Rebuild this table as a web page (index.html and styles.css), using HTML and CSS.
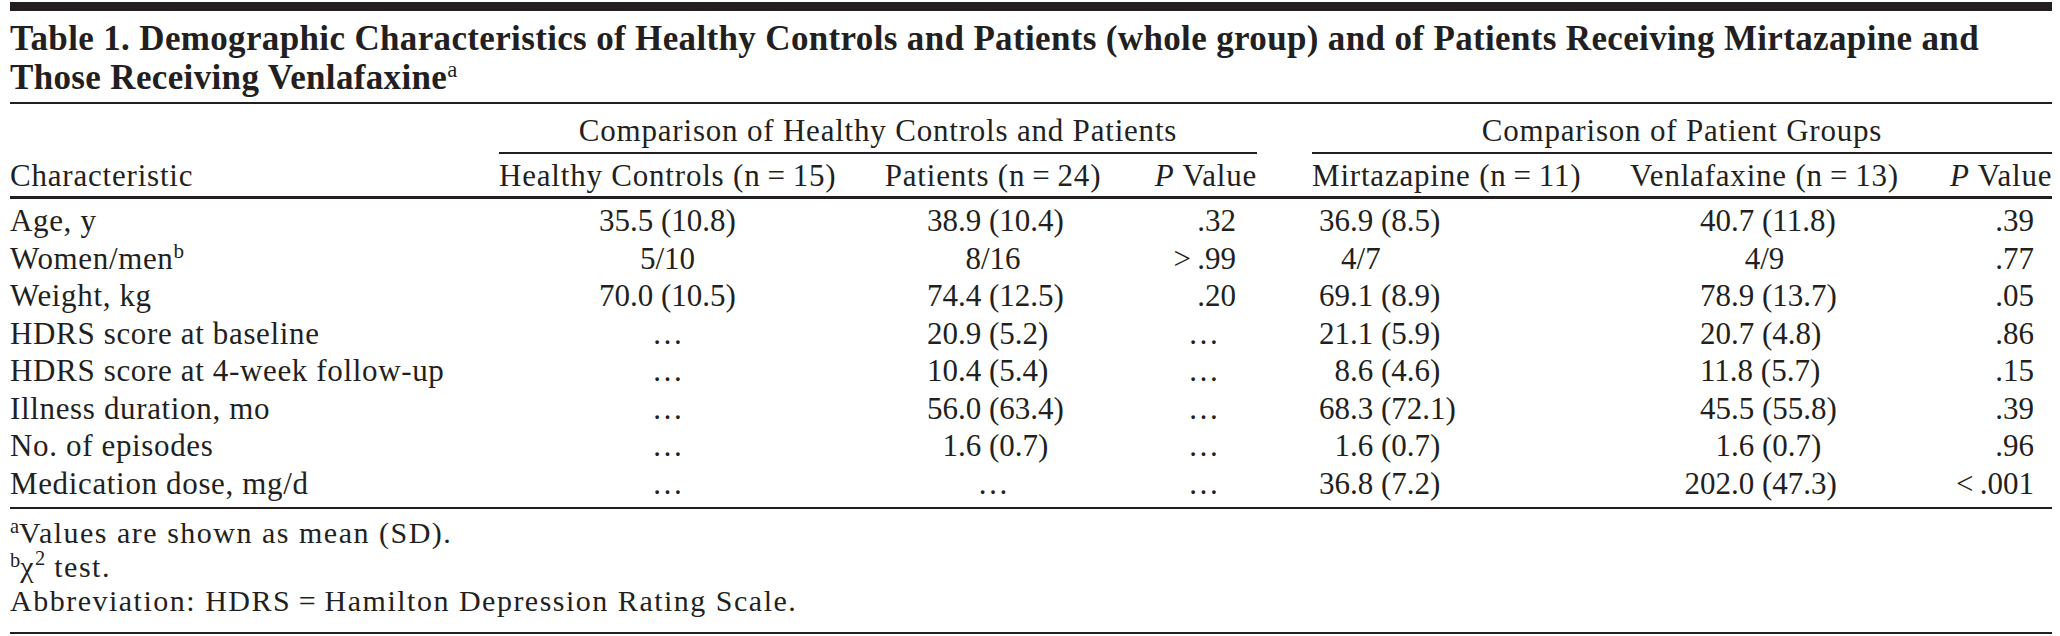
FILE: index.html
```html
<!DOCTYPE html>
<html lang="en">
<head>
<meta charset="utf-8">
<title>Table 1</title>
<link rel="stylesheet" href="styles.css">
</head>
<body>
<div class="page">
  <div class="topbar"></div>
  <h1 class="title">Table 1. Demographic Characteristics of Healthy Controls and Patients (whole group) and of Patients Receiving Mirtazapine and<br>Those Receiving Venlafaxine<sup>a</sup></h1>
  <table class="data">
    <colgroup>
      <col class="c-char">
      <col class="c-hc">
      <col class="c-pt">
      <col class="c-p1">
      <col class="c-gap">
      <col class="c-mz">
      <col class="c-vx">
      <col class="c-p2">
    </colgroup>
    <thead>
      <tr class="span-row">
        <th></th>
        <th colspan="3" class="spanner">Comparison of Healthy Controls and Patients</th>
        <th></th>
        <th colspan="3" class="spanner">Comparison of Patient Groups</th>
      </tr>
      <tr class="head-row">
        <th class="lbl">Characteristic</th>
        <th>Healthy Controls (n&#8201;=&#8201;15)</th>
        <th>Patients (n&#8201;=&#8201;24)</th>
        <th class="pv"><i>P</i> Value</th>
        <th></th>
        <th>Mirtazapine (n&#8201;=&#8201;11)</th>
        <th>Venlafaxine (n&#8201;=&#8201;13)</th>
        <th class="pv pv2"><i>P</i> Value</th>
      </tr>
    </thead>
    <tbody>
      <tr>
        <td class="lbl">Age, y</td>
        <td class="hc">35.5 (10.8)</td>
        <td class="pt">38.9 (10.4)</td>
        <td class="p1">.32</td>
        <td></td>
        <td class="mz">36.9 (8.5)</td>
        <td class="vx">40.7 (11.8)</td>
        <td class="p2">.39</td>
      </tr>
      <tr>
        <td class="lbl">Women/men<sup>b</sup></td>
        <td class="ctr">5/10</td>
        <td class="ctr">8/16</td>
        <td class="p1">&gt;&#8201;.99</td>
        <td></td>
        <td class="frac">4/7</td>
        <td class="ctr">4/9</td>
        <td class="p2">.77</td>
      </tr>
      <tr>
        <td class="lbl">Weight, kg</td>
        <td class="hc">70.0 (10.5)</td>
        <td class="pt">74.4 (12.5)</td>
        <td class="p1">.20</td>
        <td></td>
        <td class="mz">69.1 (8.9)</td>
        <td class="vx">78.9 (13.7)</td>
        <td class="p2">.05</td>
      </tr>
      <tr>
        <td class="lbl">HDRS score at baseline</td>
        <td class="ctr">&hellip;</td>
        <td class="pt">20.9 (5.2)</td>
        <td class="ctr">&hellip;</td>
        <td></td>
        <td class="mz">21.1 (5.9)</td>
        <td class="vx">20.7 (4.8)</td>
        <td class="p2">.86</td>
      </tr>
      <tr>
        <td class="lbl">HDRS score at 4-week follow-up</td>
        <td class="ctr">&hellip;</td>
        <td class="pt">10.4 (5.4)</td>
        <td class="ctr">&hellip;</td>
        <td></td>
        <td class="mz one">8.6 (4.6)</td>
        <td class="vx">11.8 (5.7)</td>
        <td class="p2">.15</td>
      </tr>
      <tr>
        <td class="lbl">Illness duration, mo</td>
        <td class="ctr">&hellip;</td>
        <td class="pt">56.0 (63.4)</td>
        <td class="ctr">&hellip;</td>
        <td></td>
        <td class="mz">68.3 (72.1)</td>
        <td class="vx">45.5 (55.8)</td>
        <td class="p2">.39</td>
      </tr>
      <tr>
        <td class="lbl">No. of episodes</td>
        <td class="ctr">&hellip;</td>
        <td class="pt one">1.6 (0.7)</td>
        <td class="ctr">&hellip;</td>
        <td></td>
        <td class="mz one">1.6 (0.7)</td>
        <td class="vx one">1.6 (0.7)</td>
        <td class="p2">.96</td>
      </tr>
      <tr class="last">
        <td class="lbl">Medication dose, mg/d</td>
        <td class="ctr">&hellip;</td>
        <td class="ctr">&hellip;</td>
        <td class="ctr">&hellip;</td>
        <td></td>
        <td class="mz">36.8 (7.2)</td>
        <td class="vx three">202.0 (47.3)</td>
        <td class="p2">&lt;&#8201;.001</td>
      </tr>
    </tbody>
  </table>
  <div class="notes">
    <p><sup>a</sup>Values are shown as mean (SD).</p>
    <p><sup>b</sup>&chi;<sup class="exp">2</sup> test.</p>
    <p>Abbreviation: HDRS&#8201;=&#8201;Hamilton Depression Rating Scale.</p>
  </div>
</div>
</body>
</html>
```

FILE: styles.css
```css
html, body {
  margin: 0;
  padding: 0;
  background: #ffffff;
}

body {
  font-family: "Liberation Serif", "Times New Roman", serif;
  color: #231f20;
  font-size: 31px;
}

.page {
  width: 2042px;
  padding: 2px 8px 0 10px;
}

.topbar {
  height: 9px;
  background: #231f20;
}

.title {
  margin: 0;
  padding: 8px 0 5px 0;
  font-size: 35px;
  line-height: 39px;
  letter-spacing: 0.35px;
  font-weight: bold;
  border-bottom: 2px solid #231f20;
}

.title sup {
  font-size: 65%;
  line-height: 0;
  vertical-align: 0.55em;
  font-weight: normal;
}

.data {
  width: 2042px;
  table-layout: fixed;
  border-collapse: separate;
  border-spacing: 0;
}

.c-char { width: 489px; }
.c-hc { width: 337px; }
.c-pt { width: 314px; }
.c-p1 { width: 107px; }
.c-gap { width: 55px; }
.c-mz { width: 267px; }
.c-vx { width: 371px; }
.c-p2 { width: 102px; }

.data th,
.data td {
  padding: 0;
  font-weight: normal;
  line-height: 35px;
  white-space: nowrap;
}

.data th {
  letter-spacing: 0.8px;
}

.span-row th {
  padding-top: 9px;
  padding-bottom: 4px;
  text-align: center;
}

.span-row th.spanner {
  border-bottom: 2px solid #231f20;
}

.head-row th {
  padding-top: 4px;
  padding-bottom: 3px;
  text-align: center;
  border-bottom: 3px solid #231f20;
}

.head-row th.lbl {
  text-align: left;
}

.head-row th.pv {
  text-align: right;
}

.head-row th.pv2 {
  padding-right: 2px;
}

.data tbody td {
  line-height: 37.5px;
  text-align: left;
}

.data tbody tr:first-child td {
  padding-top: 3px;
}

.data tbody tr.last td {
  padding-bottom: 5px;
  border-bottom: 2px solid #231f20;
}

.data td.lbl {
  text-align: left;
  letter-spacing: 0.65px;
}
.data td.hc { padding-left: 100px; }
.data td.pt { padding-left: 91px; }
.data td.mz { padding-left: 7px; }
.data td.vx { padding-left: 121px; }
.data td.p1 { text-align: right; padding-right: 21px; }
.data td.p2 { text-align: right; padding-right: 18px; }
.data td.ctr { text-align: center; }
.data td.one { text-indent: 0.5em; }
.data td.three { text-indent: -0.5em; }
.data td.frac { padding-left: 29px; }

sup {
  font-size: 68%;
  line-height: 0;
  vertical-align: 0.5em;
  letter-spacing: 0;
}

sup.exp {
  vertical-align: 0.6em;
}

.notes {
  padding: 7px 0 14px 0;
  border-bottom: 2px solid #231f20;
}

.notes p {
  margin: 0;
  font-size: 30px;
  line-height: 34px;
  letter-spacing: 1.5px;
}
```
